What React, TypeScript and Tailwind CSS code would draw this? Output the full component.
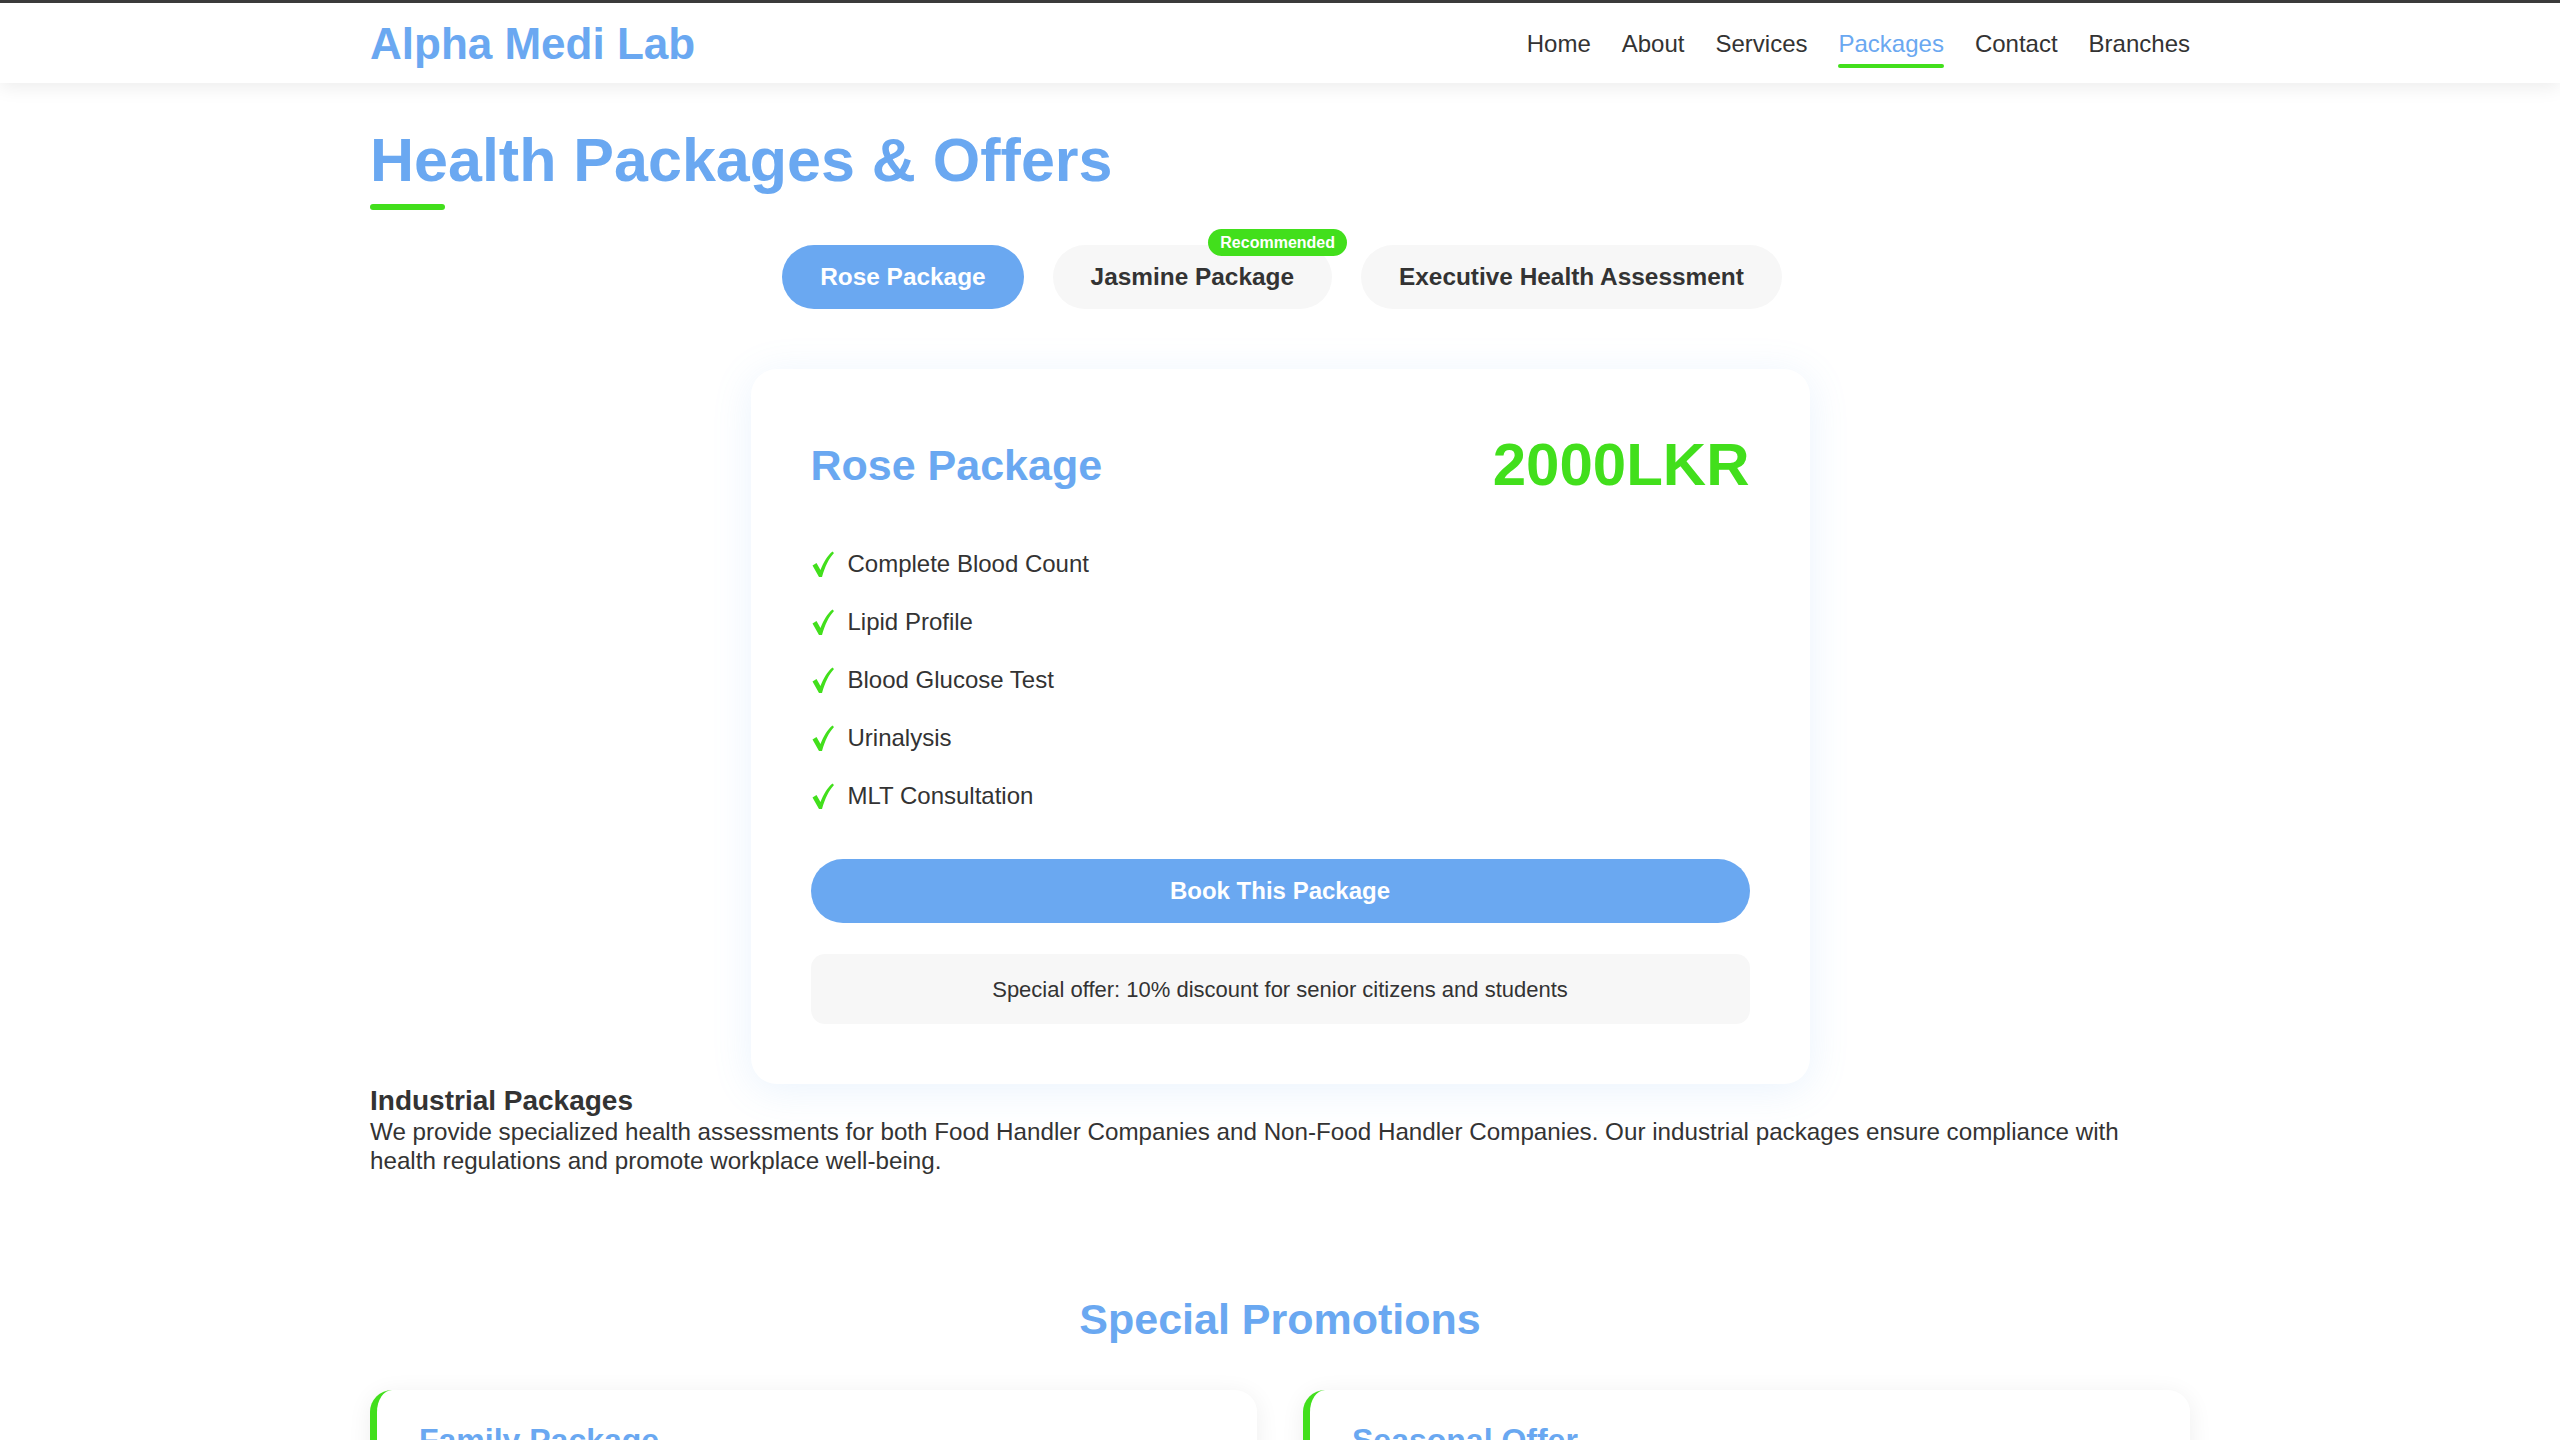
import { useState } from "react";

const packages = [
  {
    id: "rose",
    tab: "Rose Package",
    title: "Rose Package",
    price: "2000LKR",
    tests: [
      "Complete Blood Count",
      "Lipid Profile",
      "Blood Glucose Test",
      "Urinalysis",
      "MLT Consultation",
    ],
    offer: "Special offer: 10% discount for senior citizens and students",
  },
  {
    id: "jasmine",
    tab: "Jasmine Package",
    title: "Jasmine Package",
    price: "4500LKR",
    tests: [
      "Complete Blood Count",
      "Lipid Profile",
      "Liver Function Test",
      "Renal Function Test",
      "Thyroid Profile",
      "MLT Consultation",
    ],
    offer: "Special offer: 10% discount for senior citizens and students",
    recommended: true,
  },
  {
    id: "executive",
    tab: "Executive Health Assessment",
    title: "Executive Health Assessment",
    price: "9500LKR",
    tests: [
      "Full Blood Count",
      "Lipid Profile",
      "HbA1c",
      "Liver & Renal Profile",
      "ECG",
      "Doctor Consultation",
    ],
    offer: "Special offer: 10% discount for senior citizens and students",
  },
];

const navLinks = ["Home", "About", "Services", "Packages", "Contact", "Branches"];

const promotions = [
  {
    t: "Family Package",
    d: "Book health packages for 4 or more family members and get 15% off the total price.",
  },
  {
    t: "Seasonal Offer",
    d: "Enjoy special seasonal discounts on selected tests throughout the festive season.",
  },
];

function Check() {
  return (
    <svg width="24" height="28" viewBox="0 0 24 28" className="shrink-0">
      <path
        d="M1.5 15.5 L5.5 13 L9.5 20 C12.5 12 16.5 5.5 21.5 1.5 L23 3 C18 8.5 14 16 11 27 L8 27 Z"
        fill="#42df1c"
      />
    </svg>
  );
}

export default function App() {
  const [active, setActive] = useState("rose");
  const pkg = packages.find((p) => p.id === active) ?? packages[0];

  return (
    <div
      className="min-h-screen bg-white text-[#333]"
      style={{ fontFamily: '"Liberation Sans", Arial, sans-serif' }}
    >
      {/* Header */}
      <header className="relative z-10 border-t-[3px] border-[#3b3b3b] bg-white shadow-[0_4px_18px_rgba(0,0,0,0.08)]">
        <div className="mx-auto flex h-[80px] w-[1820px] items-center justify-between">
          <a className="pt-[2px] text-[44px] font-bold leading-none text-[#6aa8f1]">Alpha Medi Lab</a>
          <nav className="flex items-center gap-[31px] pt-[2px] text-[24px]">
            {navLinks.map((l) => (
              <a
                key={l}
                className={
                  l === "Packages"
                    ? "relative text-[#6aa8f1] after:absolute after:left-0 after:right-0 after:top-[38px] after:h-[4px] after:rounded-full after:bg-[#42df1c] after:content-['']"
                    : "text-[#333]"
                }
              >
                {l}
              </a>
            ))}
          </nav>
        </div>
      </header>

      <main className="mx-auto w-[1820px]">
        {/* Title */}
        <h1 className="mt-[41px] text-[61px] font-bold leading-[73px] text-[#6aa8f1]">
          Health Packages &amp; Offers
        </h1>
        <div className="mt-[7px] h-[6px] w-[75px] rounded-full bg-[#42df1c]" />

        {/* Tabs */}
        <div className="mt-[35px] flex justify-center gap-[29px] pl-[4px]">
          {packages.map((p) => (
            <button
              key={p.id}
              onClick={() => setActive(p.id)}
              className={
                "relative h-[64px] rounded-full px-[38px] text-[24.4px] font-bold " +
                (p.id === active ? "bg-[#6aa8f1] text-white" : "bg-[#f7f7f7] text-[#333]")
              }
            >
              {p.tab}
              {p.recommended && (
                <span className="absolute right-[-15px] top-[-16px] flex h-[27px] items-center rounded-full bg-[#42df1c] px-[12px] text-[16px] font-bold text-white">
                  Recommended
                </span>
              )}
            </button>
          ))}
        </div>

        {/* Package card */}
        <div className="mx-auto mt-[60px] w-[1059px] rounded-[26px] bg-white p-[60px] shadow-[0_6px_40px_rgba(106,168,241,0.14)]">
          <div className="flex h-[72px] items-center justify-between">
            <h2 className="text-[43px] font-bold text-[#6aa8f1]">{pkg.title}</h2>
            <span className="text-[60px] font-bold text-[#42df1c]">{pkg.price}</span>
          </div>
          <ul className="mt-[34px]">
            {pkg.tests.map((t) => (
              <li key={t} className="flex h-[58px] items-center gap-[13px] text-[24px] text-[#333]">
                <Check />
                {t}
              </li>
            ))}
          </ul>
          <button className="mt-[34px] h-[64px] w-full rounded-full bg-[#6aa8f1] text-[24px] font-bold text-white">
            Book This Package
          </button>
          <div className="mt-[31px] flex h-[70px] items-center justify-center rounded-[14px] bg-[#f7f7f7] text-[22px] text-[#333]">
            {pkg.offer}
          </div>
        </div>

        {/* Industrial */}
        <section className="mt-[1px]">
          <h3 className="text-[28px] font-bold leading-[32px] text-[#333]">Industrial Packages</h3>
          <p className="text-[24.2px] leading-[29px] text-[#333]">
            We provide specialized health assessments for both Food Handler Companies and Non-Food Handler
            Companies. Our industrial packages ensure compliance with health regulations and promote workplace
            well-being.
          </p>
        </section>

        {/* Promotions */}
        <section className="mt-[118px] pb-[80px]">
          <h2 className="text-center text-[43px] font-bold leading-[52px] text-[#6aa8f1]">Special Promotions</h2>
          <div className="mt-[45px] grid grid-cols-2 gap-[46px]">
            {promotions.map((c) => (
              <div
                key={c.t}
                className="rounded-[22px] border-l-[7px] border-[#42df1c] bg-white px-[42px] pb-[40px] pt-[26px] shadow-[0_4px_24px_rgba(0,0,0,0.07)]"
              >
                <h3 className="text-[32px] font-bold text-[#6aa8f1]">{c.t}</h3>
                <p className="mt-[16px] text-[24px] leading-[34px] text-[#333]">{c.d}</p>
              </div>
            ))}
          </div>
        </section>
      </main>
    </div>
  );
}
